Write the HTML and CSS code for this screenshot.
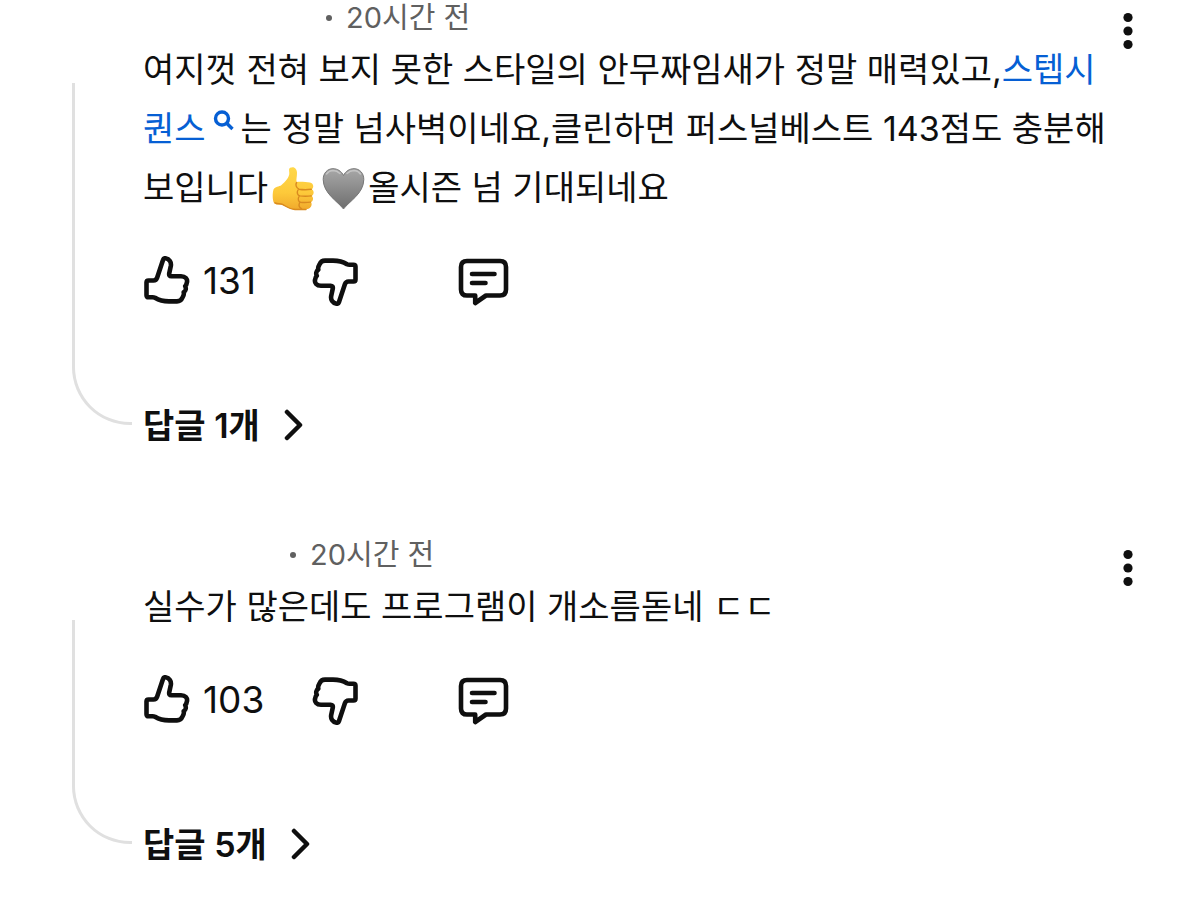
FILE: index.html
```html
<!DOCTYPE html>
<html lang="ko">
<head>
<meta charset="utf-8">
<meta name="viewport" content="width=device-width, initial-scale=1">
<title>댓글</title>
<link rel="stylesheet" href="styles.css">
</head>
<body>
<svg class="defs" aria-hidden="true">
  <defs>
    <symbol id="thumb" viewBox="0 0 50 50">
      <path d="M4.500 26.500Q4.500 24.500 6.500 24.500H11.500Q14.200 24.500 15.200 21.500L21 4Q21.600 2 23.500 2.300C27.500 3 29.500 6.300 28.800 10L27.200 17.500Q26.800 20.200 29.300 20.200H39C43.500 20.200 45.500 23 45 26C44.700 28 44.200 29.300 43.200 30.200C44.300 32.300 43.800 35 41.700 36.300C42.300 38.500 41.500 40 40.500 41.500C39.500 44 38 45.400 35 45.400H27C21 45.400 16.500 44 13 41.800Q12 41.300 10.500 41.300H6.500Q4.500 41.300 4.500 39.300Z"/>
    </symbol>
    <symbol id="reply" viewBox="0 0 54 50">
      <path d="M10 5H43Q49 5 49 11V33.500Q49 39.500 43 39.500H29L18.200 47V39.500H10Q4 39.500 4 33.500V11Q4 5 10 5Z"/>
      <path d="M15 18H37.500M15 27H28.500"/>
    </symbol>
    <symbol id="more" viewBox="0 0 10 38">
      <circle cx="5" cy="5.500" r="4.600"/><circle cx="5" cy="19" r="4.600"/><circle cx="5" cy="32.500" r="4.600"/>
    </symbol>
    <symbol id="chevron" viewBox="0 0 20 34">
      <path d="M3 4L16 17L3 30"/>
    </symbol>
    <linearGradient id="skin" x1="0" y1="0" x2="0" y2="1">
      <stop offset="0" stop-color="#ffd84a"/><stop offset="0.600" stop-color="#fdc93a"/><stop offset="1" stop-color="#f0a92c"/>
    </linearGradient>
    <linearGradient id="grey" x1="0" y1="0" x2="0" y2="1">
      <stop offset="0" stop-color="#a8a8a8"/><stop offset="1" stop-color="#6e6e6e"/>
    </linearGradient>
  </defs>
</svg>
<main class="comments">
  <article class="comment">
    <div class="thread"></div>
    <div class="content">
      <div class="meta"><span class="author author-long"></span><span class="dot"></span><time>20시간 전</time></div>
      <p class="text">여지껏 전혀 보지 못한 스타일의 안무짜임새가 정말 매력있고,<a class="topic" href="#">스텝시퀀스<svg class="search" viewBox="0 0 24 24" aria-hidden="true"><circle cx="10" cy="9.500" r="6.500"/><path d="M14.700 14.200L20.500 20"/></svg></a>는 정말 넘사벽이네요,클린하면 퍼스널베스트 143점도 충분해 보입니다<svg class="emoji" viewBox="0 0 50 50" role="img" aria-label="좋아요"><path fill="url(#skin)" d="M22 4.800C26 2.800 29 5.500 29 10C29 14 28 16 28.600 19C31 18.400 38 18.800 42 19.500C45.500 20.200 46.300 24.500 43.800 26.300C46.400 28 46.200 31.500 43.800 32.900C45.800 34.800 45.300 38 42.900 39.100C44.600 41.300 43.300 44.800 40.500 45.800C35 47.500 26 47.200 21.500 45.500C17 43.500 14.500 41.200 11 41.500C8.500 41.700 6.500 41 5.500 39C4.300 35 4.600 29 5.600 26.300C7 23.500 11 24 13.500 22C17 19 21.500 14.500 21.300 10C21.200 7.500 20.500 5.800 22 4.800Z"/><path fill="none" stroke="#d98a1f" stroke-width="1.400" stroke-linecap="round" d="M28.600 19.500C27.300 21.500 28 25 31 26.200C35 26.900 40 26.700 43.300 26.300M30 27C28.500 29.500 29.500 32.300 32 32.900C36 33.500 40 33.300 43.300 32.900M31 33.500C29.500 36 30.300 38.600 32.500 39.200C36 39.800 39.500 39.500 42.500 39.100M31.500 40C30.300 42.500 31.500 44.700 33.500 45.600M7 39.800C10 41.500 12 40 15 41.700C19 44 22 46.300 27 46.500H38"/></svg><svg class="emoji" viewBox="0 0 50 50" role="img" aria-label="회색 하트"><path fill="url(#grey)" stroke="#777" stroke-width="1" d="M25.500 46C20 38.500 5.200 30.500 5.200 16.500C5.200 10 9.500 5.700 15 5.700C19.500 5.700 23.500 8.200 25.500 12.500C27.500 8.200 31.500 5.700 36 5.700C41.500 5.700 45.800 10 45.800 16.500C45.800 30.500 31 38.500 25.500 46Z"/><path fill="none" stroke="#c4c4c4" stroke-width="1.500" stroke-linecap="round" d="M8.500 11Q11 7.600 15 7.500Q19 7.600 22 10.500M29 10.500Q32 7.600 36 7.500Q40 7.600 42.500 11"/></svg>올시즌 넘 기대되네요</p>
      <div class="actions">
        <button class="action like" type="button" aria-label="좋아요 131"><svg class="icon"><use href="#thumb"/></svg><span class="count">131</span></button>
        <button class="action dislike" type="button" aria-label="싫어요"><svg class="icon flip"><use href="#thumb"/></svg></button>
        <button class="action" type="button" aria-label="답글 달기"><svg class="icon wide"><use href="#reply"/></svg></button>
      </div>
      <button class="replies" type="button"><span class="label">답글 1개</span><svg class="chevron" aria-hidden="true"><use href="#chevron"/></svg></button>
    </div>
    <button class="menu" type="button" aria-label="작업 메뉴"><svg class="more"><use href="#more"/></svg></button>
  </article>
  <article class="comment">
    <div class="thread"></div>
    <div class="content">
      <div class="meta"><span class="author author-short"></span><span class="dot"></span><time>20시간 전</time></div>
      <p class="text">실수가 많은데도 프로그램이 개소름돋네 ㄷㄷ</p>
      <div class="actions">
        <button class="action like" type="button" aria-label="좋아요 103"><svg class="icon"><use href="#thumb"/></svg><span class="count">103</span></button>
        <button class="action dislike" type="button" aria-label="싫어요"><svg class="icon flip"><use href="#thumb"/></svg></button>
        <button class="action" type="button" aria-label="답글 달기"><svg class="icon wide"><use href="#reply"/></svg></button>
      </div>
      <button class="replies" type="button"><span class="label">답글 5개</span><svg class="chevron" aria-hidden="true"><use href="#chevron"/></svg></button>
    </div>
    <button class="menu" type="button" aria-label="작업 메뉴"><svg class="more"><use href="#more"/></svg></button>
  </article>
</main>
</body>
</html>
```
FILE: styles.css
```css
* {
  box-sizing: border-box;
}

body {
  margin: 0;
  background: #fff;
  color: #0f0f0f;
  font-family: Inter, "Noto Sans CJK KR", sans-serif;
  font-size: 34px;
}

button {
  margin: 0;
  padding: 0;
  border: 0;
  background: none;
  color: inherit;
  font: inherit;
  cursor: pointer;
}

.defs {
  position: absolute;
  width: 0;
  height: 0;
}

.comments {
  display: flex;
  flex-direction: column;
  gap: 87px;
  padding: 0 58px 0 72px;
}

.comment {
  display: grid;
  grid-template-columns: 60px minmax(0, 1fr) 28px;
}

.thread {
  margin: 83px 0 25px;
  border: solid #e0e0e0;
  border-width: 0 0 3px 3px;
  border-bottom-left-radius: 58px;
}

.content {
  padding-left: 10px;
}

.meta {
  display: flex;
  align-items: center;
  height: 36px;
  margin-bottom: 4px;
  color: #606060;
  font-size: 29px;
  line-height: 36px;
}

.author-long {
  width: 184px;
}

.author-short {
  width: 148px;
}

.dot {
  width: 6px;
  height: 6px;
  margin-right: 14px;
  border-radius: 50%;
  background: #606060;
}

.text {
  margin: 0;
  padding-left: 1px;
  line-height: 59px;
}

.topic {
  color: #065fd4;
  text-decoration: none;
}

.search {
  width: 24px;
  height: 24px;
  margin: 0 5px 0 6px;
  vertical-align: 8px;
  fill: none;
  stroke: currentColor;
  stroke-width: 3.4;
}

.emoji {
  width: 50px;
  height: 50px;
  margin: -8px 0;
  vertical-align: -5px;
}

.actions {
  display: flex;
  align-items: center;
  height: 50px;
  margin-top: 39px;
}

.action {
  display: flex;
  align-items: center;
  gap: 11px;
  height: 50px;
}

.like {
  width: 168px;
}

.count {
  padding-bottom: 2px;
  font-size: 37px;
}

.dislike {
  margin-right: 97px;
}

.icon {
  width: 50px;
  height: 50px;
  fill: none;
  stroke: #0f0f0f;
  stroke-width: 4.6;
  stroke-linecap: round;
  stroke-linejoin: round;
}

.wide {
  width: 54px;
}

.flip {
  transform: rotate(180deg);
}

.replies {
  display: flex;
  align-items: center;
  gap: 24px;
  height: 50px;
  margin-top: 94px;
  padding-left: 1px;
  font-weight: 600;
}

.label {
  padding-bottom: 4px;
}

.chevron {
  width: 20px;
  height: 34px;
  fill: none;
  stroke: #0f0f0f;
  stroke-width: 4.5;
  stroke-linecap: round;
  stroke-linejoin: round;
}

.menu {
  display: flex;
  justify-content: center;
  align-self: start;
  padding-top: 12px;
}

.more {
  width: 10px;
  height: 38px;
  fill: #0f0f0f;
}
```
